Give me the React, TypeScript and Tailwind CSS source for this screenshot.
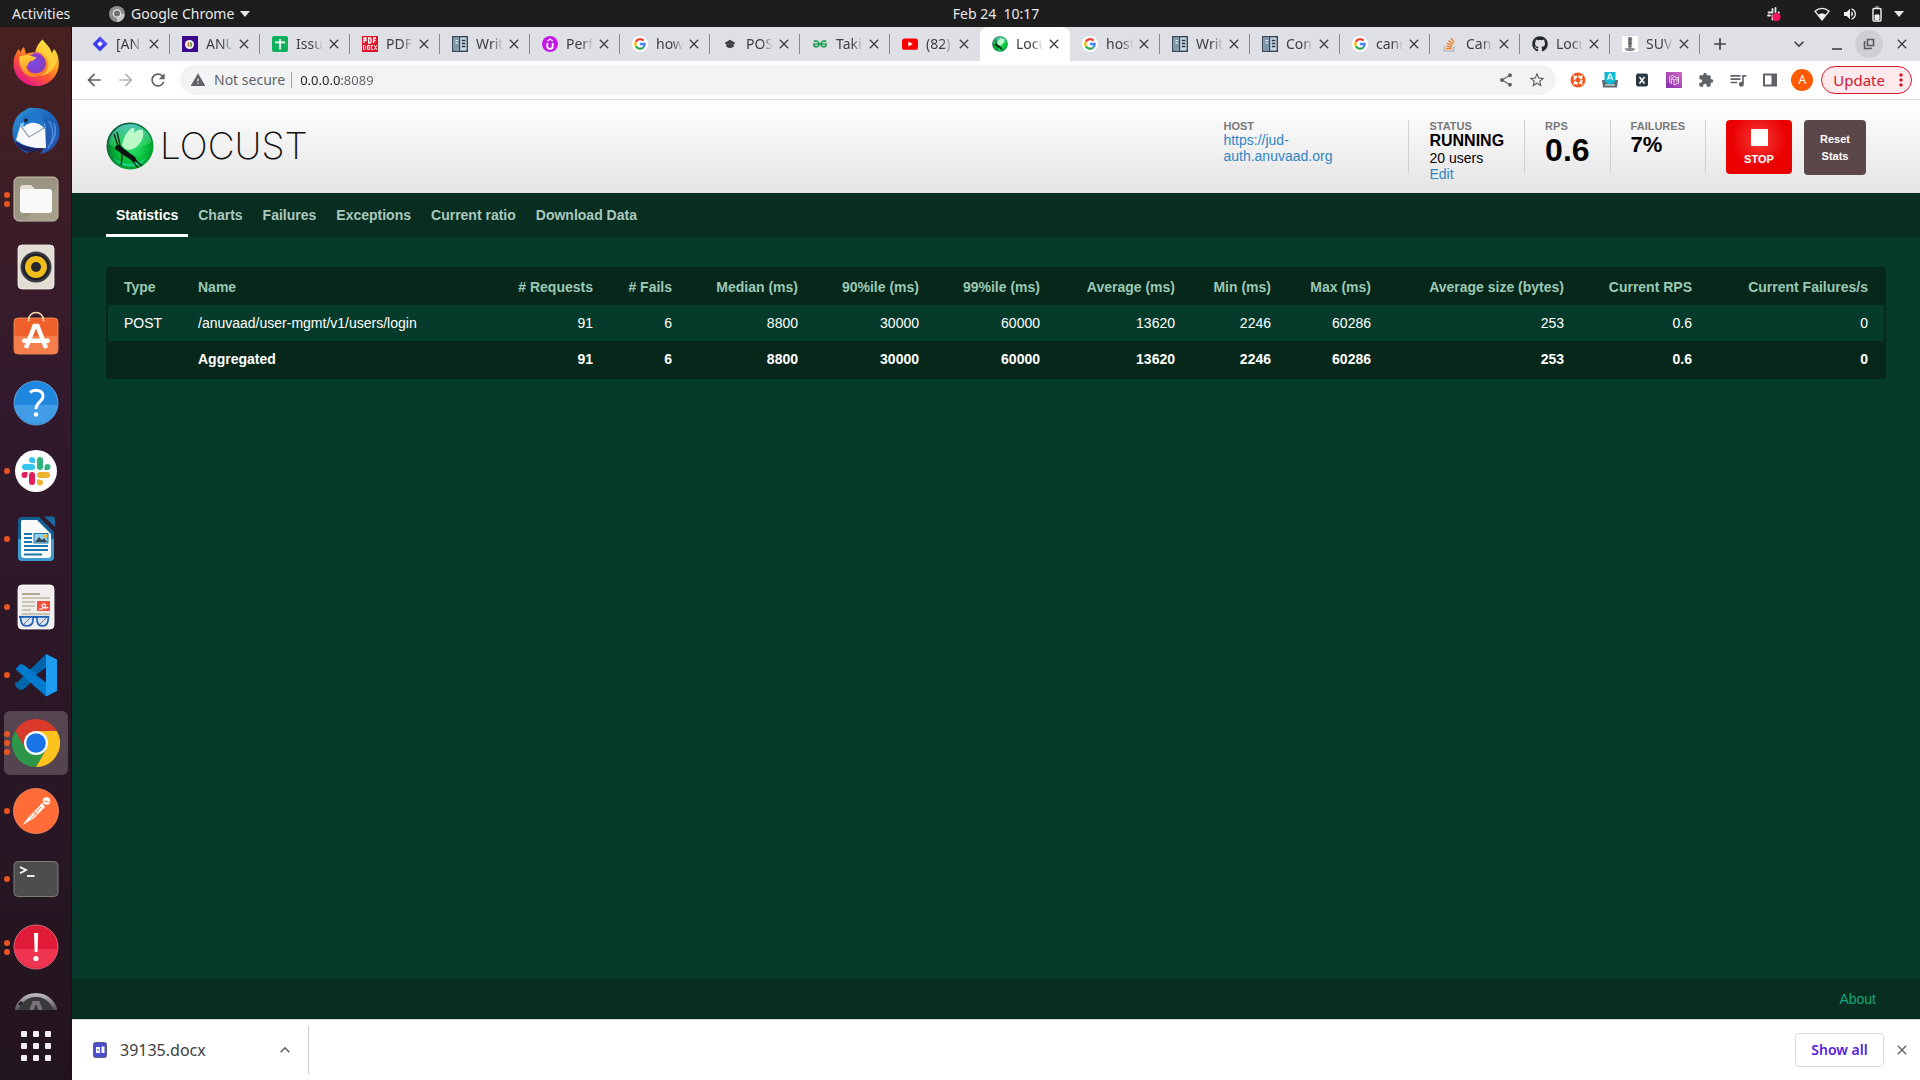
import React, { ReactNode } from "react";
import { FaGithub } from "react-icons/fa";
import {
  MdArrowBack,
  MdArrowForward,
  MdRefresh,
  MdWarning,
  MdShare,
  MdStarBorder,
  MdExtension,
  MdQueueMusic,
  MdMoreVert,
  MdAdd,
  MdExpandMore,
  MdExpandLess,
  MdClose,
  MdVolumeUp,
} from "react-icons/md";

/* ---------- Favicons (16 x 16) ---------- */

function Fav({ children }: { children: ReactNode }) {
  return (
    <svg viewBox="0 0 16 16" className="size-4 shrink-0" aria-hidden="true">
      {children}
    </svg>
  );
}

const GoogleFav = () => (
  <Fav>
    <circle cx="8" cy="8" r="8" fill="#fff" />
    <g fill="none" strokeWidth="2.3">
      <path d="M11.6 4.6A4.8 4.8 0 0 0 3.8 5.7" stroke="#ea4335" />
      <path d="M3.8 5.7a4.8 4.8 0 0 0 0 4.6" stroke="#fbbc05" />
      <path d="M3.8 10.3a4.8 4.8 0 0 0 7.4 1.2" stroke="#34a853" />
      <path d="M11.2 11.5A4.7 4.7 0 0 0 12.7 8H8" stroke="#4285f4" />
    </g>
  </Fav>
);

const DocFav = () => (
  <Fav>
    <rect x="0.7" y="0.7" width="14.6" height="14.6" fill="#c9dae7" stroke="#37474f" strokeWidth="1.4" />
    <rect x="1.4" y="1.4" width="6" height="13.2" fill="#7f97aa" />
    <path d="M7.6 1v14" stroke="#37474f" strokeWidth="1.2" />
    <path d="M3.5 4.5h2.500M3.500 7h2.500" stroke="#eef4f8" strokeWidth="1.200" />
    <path d="M9.800 4.500h3.500M9.800 7.500h3.500M9.800 10.500h3.500" stroke="#263238" strokeWidth="1.500" />
  </Fav>
);

const JiraFav = () => (
  <Fav>
    <path d="M8 0.5 15.5 8 8 15.5 0.5 8Z" fill="#3d3df5" />
    <path d="M8 0.5 15.5 8H8Z" fill="#5b4bff" />
    <path d="M8 5.2 10.8 8 8 10.8 5.2 8Z" fill="#fff" />
  </Fav>
);

const AnuvaadFav = () => (
  <Fav>
    <rect width="16" height="16" fill="#3b0a8c" />
    <circle cx="7.500" cy="8.500" r="4.500" fill="#f4f1e6" />
    <path d="M5.500 6.500h2v4h-2z" fill="#e0553d" />
    <path d="M8 6.500h2v4H8z" fill="#3aa657" />
    <circle cx="7.600" cy="8.500" r="1.100" fill="#efc94c" />
  </Fav>
);

const SheetsFav = () => (
  <Fav>
    <rect width="16" height="16" rx="2" fill="#0fb15d" />
    <path d="M8 3v10.500M3 6.400h10" stroke="#fff" strokeWidth="1.800" />
  </Fav>
);

const PdfFav = () => (
  <Fav>
    <rect width="16" height="16" fill="#e2122b" />
    <g fill="none" stroke="#fff" strokeWidth="1.300">
      <path d="M2 7V2h2v2.500H2M6.700 2h1.400l1 1v3l-1 1H6.700zM14 2h-2.400v5M11.600 4.500h2" />
      <path d="M1.500 9.500h1.200l.8.8v2.400l-.8.8H1.500zM5.500 9.500h1.800v4H5.500zM11 9.500H9.400v4H11M12.300 9.300l2.400 4.400M14.700 9.300l-2.400 4.400" strokeWidth="1" />
    </g>
  </Fav>
);

const PerfFav = () => (
  <Fav>
    <circle cx="8" cy="8" r="8" fill="#c517e8" />
    <path d="M5.300 7v3.200a2.700 2.700 0 0 0 5.400 0V7" fill="none" stroke="#fff" strokeWidth="1.800" />
    <path d="M5.300 5.200 8 3l2.700 2.200" fill="none" stroke="#fff" strokeWidth="1.300" />
  </Fav>
);

const PostFav = () => (
  <Fav>
    <path d="M2.500 7 8 3.800 13.500 7l-1.800 1.200v2.600L8 12.300l-3.700-1.500V8.200Z" fill="#3a3a3a" />
    <path d="M4 8h8" stroke="#6a6a6a" strokeWidth="0.800" />
  </Fav>
);

const GeeksFav = () => (
  <Fav>
    <g fill="none" stroke="#1f9d55" strokeWidth="1.600">
      <path d="M1.800 5.600C4 4 7 5.200 7 8a2.800 2.800 0 0 1-5.500.8M1.200 8h13.600" />
      <path d="M14.200 5.600C12 4 9 5.200 9 8a2.800 2.800 0 0 0 5.500.8" />
    </g>
  </Fav>
);

const YoutubeFav = () => (
  <Fav>
    <rect y="2.400" width="16" height="11.400" rx="2.600" fill="#f00" />
    <path d="M6.400 5.600 10.800 8.100 6.400 10.600Z" fill="#fff" />
  </Fav>
);

const StackFav = () => (
  <Fav>
    <path d="M2.300 10.300v4.700h9.400v-4.700" fill="none" stroke="#bcbbbb" strokeWidth="1.400" />
    <path d="M4 12.600h6M4.200 10.200l5.800.9M4.900 7.400l5.300 2.200M6.400 4.500l4.500 3.600M9 1.900l3.300 4.700" stroke="#f48024" strokeWidth="1.400" />
  </Fav>
);

const SuvFav = () => (
  <Fav>
    <rect width="16" height="16" fill="#fff" />
    <circle cx="8" cy="3" r="2.300" fill="#808080" />
    <circle cx="8" cy="7.600" r="2.300" fill="#8c8c8c" />
    <path d="M8 3v11" stroke="#5c5c5c" strokeWidth="1.800" />
    <path d="M6 5.300h4M6 10.300h4" stroke="#777" strokeWidth="1.200" />
    <path d="M3 12.500c2 2.600 8 2.600 10 0M5 12.500h6" fill="none" stroke="#8a8a8a" strokeWidth="1.600" />
  </Fav>
);

function LocustBall({ className }: { className: string }) {
  return (
    <svg viewBox="0 0 48 48" className={className} aria-hidden="true">
      <defs>
        <radialGradient id="ball" cx="0.55" cy="0.55" r="0.55">
          <stop offset="0" stopColor="#2fe36b" />
          <stop offset="0.55" stopColor="#06bf3c" />
          <stop offset="0.85" stopColor="#04962f" />
          <stop offset="1" stopColor="#0a5a3c" />
        </radialGradient>
        <linearGradient id="gloss" x1="0" y1="0" x2="0" y2="1">
          <stop offset="0" stopColor="#52c9c4" stopOpacity="0.95" />
          <stop offset="1" stopColor="#5df08e" stopOpacity="0.2" />
        </linearGradient>
      </defs>
      <circle cx="24" cy="24" r="23.500" fill="url(#ball)" />
      <path d="M24 2A22 22 0 0 0 2.500 22C14 30 34 28 45.500 20A22 22 0 0 0 24 2Z" fill="url(#gloss)" />
      <path d="M7 35a20 20 0 0 0 34 0c-9 9-25 9-34 0Z" fill="#1fe0a0" opacity="0.75" />
      <path d="M16 23C18 13 24 5 28 6c2 3-3 14-10 20ZM18 26C23 14 31 6 36.500 8c3 7-3 19-14.500 20Z" fill="#d2ffd6" opacity="0.85" />
      <path d="M9 27c0-3 2-5 5-4l4 4 11 8 2 4-3 1-12-8-4-3Z" fill="#0b1410" />
      <path d="M12 24 8 12M14 23l-3-13M16 31v6l-1 6M27 36l9 8M25 37l7 9" stroke="#0b1410" strokeWidth="1.200" fill="none" />
    </svg>
  );
}

/* ---------- Dock icons (48 x 48) ---------- */

function Dock({ children }: { children: ReactNode }) {
  return (
    <svg viewBox="0 0 48 48" className="size-12" aria-hidden="true">
      {children}
    </svg>
  );
}

const Firefox = () => (
  <Dock>
    <defs>
      <linearGradient id="ff1" x1="0.85" y1="0.05" x2="0.25" y2="0.95">
        <stop offset="0" stopColor="#fff44f" />
        <stop offset="0.35" stopColor="#ffa520" />
        <stop offset="0.65" stopColor="#ff5a30" />
        <stop offset="1" stopColor="#e31587" />
      </linearGradient>
      <linearGradient id="ff2" x1="0.2" y1="0" x2="0.5" y2="1">
        <stop offset="0" stopColor="#ffd43a" />
        <stop offset="1" stopColor="#ff7c2a" />
      </linearGradient>
      <radialGradient id="ff3" cx="0.4" cy="0.5" r="0.6">
        <stop offset="0" stopColor="#7a4be8" />
        <stop offset="1" stopColor="#8a3bb8" />
      </radialGradient>
    </defs>
    <path d="M30.500 0.500c2 3.500 5 5 7.500 9 1 2 1.500 3.500 2 4.500l2-4C45 13 47 18 46.800 25 46.500 37 37 47 24.500 47S1.500 37.500 1.500 25c0-7 2.500-11.500 5.500-15l1.500 3.500C9 11 10.500 9 12 8l2 7c3-1 6-2 9-1.500C24 8 27 4 30.500 0.500Z" fill="url(#ff1)" />
    <path d="M30.500 0.500C27 4 24.500 8 25 12.500c6 1 11 5 11.500 11.500.3 6-4 11-9 13 9-1 16-7 17-15-1-4-3-5.500-5.500-8-1-6-6-8-8.500-13.500Z" fill="#ffd83d" opacity="0.75" />
    <circle cx="24" cy="24.500" r="10" fill="url(#ff3)" />
    <path d="M7 18c4-1.500 7-2.500 11-1.500 2 .5 3 1.500 6 1.500-.5 3-4 4-6 4.500-2 1-1 3-3.500 5C15 33 20 35 24 34.500c4-.5 6-2 8-3.500 1 3-5 7-10.500 7C13 38 7 30 7 18Z" fill="url(#ff2)" />
    <path d="M21 14c3-1 7 0 9.500 2-2-.3-3 0-4 .2Z" fill="#b833e1" />
  </Dock>
);

const Thunderbird = () => (
  <Dock>
    <defs>
      <linearGradient id="tb" x1="0" y1="0" x2="1" y2="1">
        <stop offset="0" stopColor="#2f9ae0" />
        <stop offset="0.5" stopColor="#1b63b8" />
        <stop offset="1" stopColor="#2a4fa5" />
      </linearGradient>
    </defs>
    <path d="M12 4C15 1 18 0 21 1c14-1 26 8 26.500 23C48 36 40 45 28 47l4-6-18 5C5 41 0 34 .5 24 1 15 5 7 12 4Z" fill="url(#tb)" />
    <path d="M4 33 9 16c8-2 17-3 24 1l1 24c-11 1-23-2-30-8Z" fill="#f7f8fa" />
    <path d="m8 18 9 12 17-10" fill="none" stroke="#9aa3b5" strokeWidth="1.300" />
    <path d="M9 17C9 10 13 6 18 6c10 0 15 6 15 16-4-5-9-7-14-6-4 1-6 2-7 4Z" fill="#2277cc" />
    <path d="M3 34c8 6 19 8 30 7-7 4-16 5-22 2-4-2-7-5-8-9Z" fill="#20205a" />
    <path d="M37 14c5 8 5 18-1 27M42 16c3 8 1 15-3 21" fill="none" stroke="#4a8fe0" strokeWidth="1.500" />
    <circle cx="14" cy="13.500" r="2" fill="#20242d" />
    <path d="m8 17 4-2-1 6Z" fill="#7cc8f2" />
  </Dock>
);

const Files = () => (
  <Dock>
    <rect x="2" y="2" width="44" height="44" rx="5" fill="#9c9482" stroke="#c9c3b2" strokeWidth="1" />
    <path d="M46 12v29a5 5 0 0 1-5 5H12Z" fill="#ada592" opacity="0.7" />
    <path d="M8 18v-5q0-3 3-3h8l4 4h14v6Z" fill="#e4dfd2" />
    <rect x="8" y="14" width="32" height="24" rx="3" fill="#faf9f7" />
  </Dock>
);

const Music = () => (
  <Dock>
    <rect x="6" y="2" width="36" height="44" rx="4" fill="#e3ded4" stroke="#f5f3ee" strokeWidth="0.800" />
    <circle cx="24" cy="24" r="15.500" fill="#3b3d46" />
    <circle cx="24" cy="24" r="13.500" fill="#1f2129" />
    <circle cx="24" cy="24" r="11" fill="#f0bd1c" />
    <circle cx="24" cy="24" r="5" fill="#25262b" />
  </Dock>
);

const Software = () => (
  <Dock>
    <rect x="2" y="7" width="44" height="36" rx="4" fill="#f0602a" stroke="#f7965f" strokeWidth="0.800" />
    <path d="M2.500 25h43v14a4 4 0 0 1-4 4h-35a4 4 0 0 1-4-4Z" fill="#f47f4c" />
    <path d="M16.500 10.500V9a7.500 7.500 0 0 1 15 0v1.500" fill="none" stroke="#f6dcae" strokeWidth="1.600" />
    <path d="M14 37 22.500 15h3L34 37" fill="none" stroke="#fff" strokeWidth="4.500" />
    <rect x="10" y="27.500" width="28" height="4.500" rx="2.200" fill="#fff" />
  </Dock>
);

const Help = () => (
  <Dock>
    <circle cx="24" cy="24" r="22" fill="#1f87dd" stroke="#6bb6ef" strokeWidth="0.800" />
    <path d="M2.200 26h43.600a22 22 0 0 1-43.600 0Z" fill="#429de6" />
    <path d="M18 13.500c3-3 13-3.500 13 3.500 0 6-7 6-7 13" fill="none" stroke="#fff" strokeWidth="3" />
    <circle cx="24" cy="35.500" r="2.300" fill="#fff" />
  </Dock>
);

const Slack = () => (
  <Dock>
    <circle cx="24" cy="24" r="21" fill="#fff" />
    <g fill="#36c5f0">
      <path d="M23 13a3 3 0 1 0-3 3h3Z" />
      <rect x="10" y="17" width="13" height="6" rx="3" />
    </g>
    <g fill="#2eb67d">
      <rect x="25" y="10" width="6" height="13" rx="3" />
      <path d="M32.500 20a3 3 0 1 1 3 3h-3Z" />
    </g>
    <g fill="#ecb22e">
      <rect x="25" y="25" width="13" height="6" rx="3" />
      <path d="M25 32.500h3a3 3 0 1 1-3 3Z" />
    </g>
    <g fill="#e01e5a">
      <path d="M15.500 25h-3a3 3 0 1 0 3 3Z" />
      <rect x="17" y="25" width="6" height="13" rx="3" />
    </g>
  </Dock>
);

const Writer = () => (
  <Dock>
    <path d="M10 2h17l15 15v25a4 4 0 0 1-4 4H10a4 4 0 0 1-4-4V6a4 4 0 0 1 4-4Z" fill="#11608f" />
    <path d="M6 24h36v18a4 4 0 0 1-4 4H10a4 4 0 0 1-4-4Z" fill="#3b9bce" />
    <path d="M10 5h15l14 14v21q0 3-3 3H12q-3 0-3-3V6Z" fill="#fafafa" />
    <path d="M32 1.500h8q3 0 3 3V12Z" fill="#186a9c" />
    <path d="M12 19h8M12 23h8M12 27h8M12 31h24M12 35h24M12 39.500h18" stroke="#1876aa" strokeWidth="1.800" />
    <rect x="22" y="18.500" width="14" height="9.500" fill="#8fd0f0" stroke="#1876aa" strokeWidth="1" />
    <path d="m23 27 4-5 3 3 2-2 3 4Z" fill="#3a4550" />
    <circle cx="33.500" cy="21" r="1.800" fill="#f3b51d" />
  </Dock>
);

const Evince = () => (
  <Dock>
    <rect x="6" y="2" width="36" height="44" rx="4" fill="#f1efed" stroke="#fff" strokeWidth="0.800" />
    <path d="M10 11h18" stroke="#b0a68e" strokeWidth="2" />
    <path d="M10 15h28M10 19h13M10 23h13M10 27h9M10 31h28" stroke="#c9c3b4" strokeWidth="1.800" />
    <rect x="25" y="18" width="13" height="10" fill="#f0503c" />
    <path d="M27 26c4 1 7-2 6.500-4s-4-1-3.500 1 4 3 6 1" fill="none" stroke="#fff" strokeWidth="1.200" />
    <path d="M7 34h30" fill="none" stroke="#1a5fb4" strokeWidth="2.200" />
    <path d="M8.500 34H21v4q-1 5-6 5t-6-5ZM25 34h11.500l-.5 4q-1 5-5.500 5T25 38Z" fill="#d5e1ee" stroke="#1a5fb4" strokeWidth="1.600" />
    <path d="m12 41 6-6M28 41l6-6" stroke="#777" strokeWidth="1" />
  </Dock>
);

const Code = () => (
  <Dock>
    <path d="M34 3 5 31.500 3.200 31v4l4.500 4 4-.8L34 17Z" fill="#0065a9" />
    <path d="M4 17.500 8 13l3.500.8L34 30v15.500L3.800 18.500Z" fill="#007acc" />
    <path d="M34 3v42.500L45 40V8.500Z" fill="#1f9cf0" />
    <path d="M34 16.500v15L24 24Z" fill="#2c172c" />
  </Dock>
);

const Chrome = () => (
  <Dock>
    <path d="M24 12h20.800A24 24 0 0 0 3.200 12L13.600 30Z" fill="#d93a2b" />
    <path d="M13.600 30 3.200 12A24 24 0 0 0 24 48L34.400 30Z" fill="#2d9648" />
    <path d="M34.400 18 34.400 30 24 48A24 24 0 0 0 44.800 12H24Z" fill="#fcc31e" />
    <circle cx="24" cy="24" r="12" fill="#fff" />
    <circle cx="24" cy="24" r="9.800" fill="#1a73e8" />
  </Dock>
);

const Postman = () => (
  <Dock>
    <circle cx="24" cy="24" r="22.500" fill="#ff6c37" stroke="#ff8e63" strokeWidth="0.800" />
    <circle cx="34.500" cy="14" r="3.800" fill="#fff" />
    <path d="M30 16 33 20 21 32l-4 2-6.500 4.500L15 32l3-4Z" fill="#fff" />
    <path d="m19 32 10-12M17 30l11-12M32 14l5 1M22 25l3 3" stroke="#ff6c37" strokeWidth="0.900" />
  </Dock>
);

const Terminal = () => (
  <Dock>
    <rect x="2" y="6.500" width="44" height="35" rx="4" fill="#4d4d4d" stroke="#7c7c78" strokeWidth="1" />
    <path d="m8 12 6 3-6 3.200" fill="none" stroke="#fff" strokeWidth="1.800" />
    <path d="M15 21h7.500" stroke="#fff" strokeWidth="1.800" />
  </Dock>
);

const Alert = () => (
  <Dock>
    <circle cx="24" cy="24" r="22" fill="#df1b38" stroke="#f47c8c" strokeWidth="0.800" />
    <path d="M2.200 26h43.600a22 22 0 0 1-43.600 0Z" fill="#ee3450" />
    <path d="M22 10h4.200l-.7 19h-2.800Z" fill="#fff" />
    <circle cx="24" cy="35.500" r="2.600" fill="#fff" />
  </Dock>
);

const Updater = () => (
  <Dock>
    <defs>
      <linearGradient id="upd" x1="0" y1="0" x2="0" y2="1">
        <stop offset="0" stopColor="#b9b7b9" />
        <stop offset="0.400" stopColor="#4a444a" />
      </linearGradient>
    </defs>
    <circle cx="24" cy="24" r="20" fill="#3b383b" stroke="url(#upd)" strokeWidth="4" />
    <path d="m17 26 5-14h4l5 14" fill="none" stroke="#77727a" strokeWidth="4" />
    <path d="m7 14 3-3" stroke="#2a222a" strokeWidth="3" />
  </Dock>
);

const dockItems: { name: string; icon: ReactNode; dots: number; active?: boolean }[] = [
  { name: "Firefox", icon: <Firefox />, dots: 0 },
  { name: "Thunderbird", icon: <Thunderbird />, dots: 0 },
  { name: "Files", icon: <Files />, dots: 2 },
  { name: "Rhythmbox", icon: <Music />, dots: 0 },
  { name: "Ubuntu Software", icon: <Software />, dots: 0 },
  { name: "Help", icon: <Help />, dots: 0 },
  { name: "Slack", icon: <Slack />, dots: 1 },
  { name: "LibreOffice Writer", icon: <Writer />, dots: 1 },
  { name: "Document Viewer", icon: <Evince />, dots: 1 },
  { name: "Visual Studio Code", icon: <Code />, dots: 1 },
  { name: "Google Chrome", icon: <Chrome />, dots: 3, active: true },
  { name: "Postman", icon: <Postman />, dots: 1 },
  { name: "Terminal", icon: <Terminal />, dots: 1 },
  { name: "Problem Report", icon: <Alert />, dots: 2 },
  { name: "Software Updater", icon: <Updater />, dots: 0 },
];

/* ---------- Desktop shell ---------- */

function TopBar() {
  return (
    <header className="grid h-[27px] shrink-0 grid-cols-[1fr_auto_1fr] items-center bg-[#1d1d1d] pl-18 text-sm text-[#e8e8e8]">
      <div className="-ml-18 flex items-center">
        <button className="ml-3 w-[97px] text-left">Activities</button>
        <button className="flex items-center gap-1.5">
          <svg viewBox="0 0 16 16" className="size-4" aria-hidden="true">
            <circle cx="8" cy="8" r="8" fill="#8d8d8d" />
            <path d="M8 8h7.500A8 8 0 0 1 8 16Z" fill="#c9c9c9" />
            <circle cx="8" cy="7.500" r="4.200" fill="#e5e5e5" />
            <circle cx="8" cy="7.500" r="3" fill="#707070" />
          </svg>
          <span>Google Chrome</span>
          <svg viewBox="0 0 10 6" className="h-1.5 w-2.5" aria-hidden="true">
            <path d="M0 0h10L5 6Z" fill="#e8e8e8" />
          </svg>
        </button>
      </div>
      <button className="whitespace-pre">Feb 24  10:17</button>
      <div className="flex items-center justify-end pr-4">
        <svg viewBox="0 0 16 16" className="mr-8 size-4" aria-hidden="true">
          <g stroke="#e8e8e8" strokeWidth="1.800" strokeLinecap="round">
            <path d="M6.500 3v3M9.500 2v4M2.500 6.500h4M12.500 6.500h.5M2 9.500h2M6.500 9.500v4" />
          </g>
          <circle cx="10.500" cy="11" r="4.200" fill="#f4145f" />
        </svg>
        <svg viewBox="0 0 16 16" className="mr-3 size-4" aria-hidden="true">
          <path d="M1 5.200C5 1.500 11 1.500 15 5.200L8 14Z" fill="none" stroke="#f2f2f2" strokeWidth="1.200" />
          <path d="M4.300 8.800c2-1.700 5.400-1.700 7.400 0L8 14Z" fill="#f2f2f2" />
        </svg>
        <MdVolumeUp className="mr-3.5 size-4 text-[#f2f2f2]" />
        <svg viewBox="0 0 10 16" className="mr-3 h-4 w-2.5" aria-hidden="true">
          <rect x="1" y="2.500" width="8" height="12.500" rx="1" fill="none" stroke="#f2f2f2" strokeWidth="1.400" />
          <path d="M3.500 1h3M3 9h4v4.500H3Z" stroke="#f2f2f2" fill="#f2f2f2" strokeWidth="1" />
        </svg>
        <svg viewBox="0 0 10 6" className="h-1.5 w-2.5" aria-hidden="true">
          <path d="M0 0h10L5 6Z" fill="#e8e8e8" />
        </svg>
      </div>
    </header>
  );
}

function Sidebar() {
  return (
    <nav
      aria-label="Dock"
      className="flex w-18 shrink-0 flex-col border-r border-[#1b1018] bg-linear-to-b from-[#47211f] via-[#32192d] via-35% to-[#22141e] pt-0.5"
    >
      <div className="flex min-h-0 flex-1 flex-col overflow-hidden">
        {dockItems.map((d) => (
          <button
            key={d.name}
            aria-label={d.name}
            className="relative flex h-17 shrink-0 items-center justify-center"
          >
            <span
              className={
                d.active
                  ? "flex size-16 items-center justify-center rounded-md bg-white/20"
                  : "flex size-16 items-center justify-center"
              }
            >
              {d.icon}
            </span>
            <span className="absolute inset-y-0 left-1 flex flex-col items-center justify-center gap-[3px]">
              {Array.from({ length: d.dots }, (_, i) => (
                <span key={i} className="size-1.5 rounded-full bg-[#e95420]" />
              ))}
            </span>
          </button>
        ))}
      </div>
      <button aria-label="Show applications" className="flex h-[70px] shrink-0 items-center justify-center pt-0.5">
        <span className="grid grid-cols-3 gap-1.5">
          {Array.from({ length: 9 }, (_, i) => (
            <span key={i} className="size-1.5 rounded-[1px] bg-[#f2f0ef]" />
          ))}
        </span>
      </button>
    </nav>
  );
}

/* ---------- Browser chrome ---------- */

const tabs: { title: string; icon: ReactNode; active?: boolean }[] = [
  { title: "[AN", icon: <JiraFav /> },
  { title: "ANU", icon: <AnuvaadFav /> },
  { title: "Issu", icon: <SheetsFav /> },
  { title: "PDF", icon: <PdfFav /> },
  { title: "Writ", icon: <DocFav /> },
  { title: "Perf", icon: <PerfFav /> },
  { title: "how", icon: <GoogleFav /> },
  { title: "POS", icon: <PostFav /> },
  { title: "Taki", icon: <GeeksFav /> },
  { title: "(82)", icon: <YoutubeFav /> },
  { title: "Locu", icon: <LocustBall className="size-4 shrink-0" />, active: true },
  { title: "host", icon: <GoogleFav /> },
  { title: "Writ", icon: <DocFav /> },
  { title: "Con", icon: <DocFav /> },
  { title: "cann", icon: <GoogleFav /> },
  { title: "Can", icon: <StackFav /> },
  { title: "Locu", icon: <FaGithub className="size-4 shrink-0 text-[#24292f]" /> },
  { title: "SUV", icon: <SuvFav /> },
];

function TabStrip() {
  return (
    <div className="flex h-[34px] shrink-0 items-stretch bg-[#dee0e6] pl-2">
      {tabs.map((t, i) => {
        const divided = !t.active && !tabs[i + 1]?.active;
        return (
          <div
            key={i}
            className={
              t.active
                ? "flex w-[90px] items-center rounded-t-lg bg-white pl-3"
                : "flex w-[90px] items-center pl-3"
            }
          >
            {t.icon}
            <button className="ml-2 w-[27px] overflow-hidden text-left text-sm whitespace-nowrap text-[#3c4043] [mask-image:linear-gradient(to_right,black_60%,transparent)]">
              {t.title}
            </button>
            <button aria-label="Close tab" className="ml-[3px] flex size-4 items-center justify-center">
              <MdClose className="size-4 text-[#3c4043]" />
            </button>
            {divided && <span className="ml-auto h-5 w-px bg-[#85888e]" />}
          </div>
        );
      })}
      <button aria-label="New tab" className="ml-2.5 flex items-center">
        <MdAdd className="size-5 text-[#3c4043]" />
      </button>
      <div className="ml-auto flex items-center pr-2.5 text-[#3c4043]">
        <button aria-label="Search tabs" className="mr-5">
          <MdExpandMore className="size-5" />
        </button>
        <button aria-label="Minimize" className="mr-2.5 flex size-4 items-end justify-center pb-0.5">
          <span className="h-0.5 w-2.5 bg-[#5f6368]" />
        </button>
        <button aria-label="Restore" className="mr-[11px] flex size-7 items-center justify-center rounded-full bg-[#cdcfd4]">
          <svg viewBox="0 0 12 12" className="size-3" aria-hidden="true">
            <path d="M4.500 1.500h6v6h-6ZM2.500 4H1.500v6.500H8V9.500" fill="none" stroke="#55585d" strokeWidth="1.600" />
          </svg>
        </button>
        <button aria-label="Close window">
          <MdClose className="size-4" />
        </button>
      </div>
    </div>
  );
}

function Toolbar() {
  return (
    <div className="flex h-[39px] shrink-0 items-center border-b border-[#d8dadd] bg-white text-[#5f6368]">
      <div className="flex items-center gap-3 px-3">
        <button aria-label="Back">
          <MdArrowBack className="size-5" />
        </button>
        <button aria-label="Forward">
          <MdArrowForward className="size-5 text-[#b4b6b9]" />
        </button>
        <button aria-label="Reload">
          <MdRefresh className="size-5" />
        </button>
      </div>
      <div className="flex h-[30px] flex-1 items-center rounded-full bg-[#f1f3f4] pr-2.5 pl-2.5 text-sm">
        <MdWarning className="size-4" />
        <label htmlFor="address" className="ml-2">
          Not secure
        </label>
        <span className="mx-1.5 h-4 w-px bg-[#9b9ea2]" />
        <input
          id="address"
          defaultValue="0.0.0.0:8089"
          className="ml-0.5 min-w-0 flex-1 bg-linear-to-r from-[#202124] from-[42px] to-[#5f6368] to-[42px] bg-clip-text text-[13px] text-transparent outline-none"
        />
        <button aria-label="Share" className="mr-3.5">
          <MdShare className="size-4" />
        </button>
        <button aria-label="Bookmark">
          <MdStarBorder className="size-[18px]" />
        </button>
      </div>
      <div className="ml-3.5 flex items-center gap-4">
        <button aria-label="Extension">
          <svg viewBox="0 0 16 16" className="size-4" aria-hidden="true">
            <circle cx="8" cy="8" r="7.500" fill="#f25a22" />
            <circle cx="8" cy="8" r="3.600" fill="none" stroke="#fff" strokeWidth="2" strokeDasharray="4.200 1.450" />
            <path d="m3.500 3.500 2 2M12.500 3.500l-2 2M3.500 12.500l2-2M12.500 12.500l-2-2" stroke="#fff" strokeWidth="1.200" />
          </svg>
        </button>
        <button aria-label="Translate extension">
          <svg viewBox="0 0 16 16" className="size-4" aria-hidden="true">
            <path d="M0 8h16l-1 7.500H1Z" fill="#5e6b70" />
            <path d="M2.500 0h11v9l-3 3h-5l-3-3Z" fill="#0fbcd4" />
            <path d="m5.500 8 2-6h1l2 6M6.500 6h3" fill="none" stroke="#fff" strokeWidth="1.200" />
            <path d="M3 13h10" stroke="#c3cacc" strokeWidth="1.500" />
          </svg>
        </button>
        <button aria-label="XPath extension">
          <svg viewBox="0 0 16 16" className="size-4" aria-hidden="true">
            <rect x="2" y="1.500" width="12" height="13" rx="2" fill="#2b3a42" />
            <path d="m5.500 5 5 6.500M10.500 5l-5 6.500" stroke="#fff" strokeWidth="1.500" />
          </svg>
        </button>
        <button aria-label="Recorder extension">
          <svg viewBox="0 0 16 16" className="size-4" aria-hidden="true">
            <defs>
              <linearGradient id="rec" x1="0" y1="1" x2="1" y2="0">
                <stop offset="0" stopColor="#8a2fb0" />
                <stop offset="1" stopColor="#cf6ac0" />
              </linearGradient>
            </defs>
            <rect width="16" height="16" fill="url(#rec)" />
            <path d="M3.500 5v5l2 1.500V6.500L8 8v5M3.500 5l3-1.500L11 6v4M5.500 6.500l2-1M8 8l2-1M11 6l1.500-1v6L8 13" fill="none" stroke="#f3dcf7" strokeWidth="0.900" />
          </svg>
        </button>
        <button aria-label="Extensions">
          <MdExtension className="size-4" />
        </button>
        <button aria-label="Media controls">
          <MdQueueMusic className="size-4 scale-125" />
        </button>
        <button aria-label="Side panel">
          <svg viewBox="0 0 16 16" className="size-4" aria-hidden="true">
            <path d="M1 1.500h14v13H1Z" fill="#5f6368" />
            <path d="M3 3.500h6.500v9H3Z" fill="#fff" />
          </svg>
        </button>
      </div>
      <button className="ml-[13px] flex size-[22px] items-center justify-center rounded-full bg-[#ff5a00] text-xs text-white">
        A
      </button>
      <button className="mr-2 ml-2 flex h-7 items-center rounded-full border border-[#d5162e] bg-[#fbe9eb] pl-[11px] text-[15px] text-[#d5162e]">
        Update
        <MdMoreVert className="ml-1.5 size-5" />
      </button>
    </div>
  );
}

/* ---------- Locust page ---------- */

function PageHeader() {
  return (
    <div className="flex h-[93px] shrink-0 items-start justify-between bg-linear-to-b from-white to-[#e4e4e4] pr-[54px] pl-[34px]">
      <a href="#top" className="flex items-center gap-1.5 pt-[22px] text-[#111]">
        <LocustBall className="size-12" />
        <span className="font-['Inter',sans-serif] text-[37px] leading-12 font-extralight">LOCUST</span>
      </a>
      <div className="flex items-start pt-5 text-sm leading-4 text-black">
        <dl className="flex">
          <div className="h-[53px] w-[186px] border-r border-[#d0d0d0] pr-5">
            <dt className="text-[11px] leading-3 font-bold text-[#7a7a7a]">HOST</dt>
            <dd className="w-[120px]">
              <a href="#host" className="text-[#3086c4]">
                https://jud-auth.anuvaad.org
              </a>
            </dd>
          </div>
          <div className="h-[53px] border-r border-[#d0d0d0] px-5">
            <dt className="text-[11px] leading-3 font-bold text-[#7a7a7a]">STATUS</dt>
            <dd>
              <div className="text-base leading-[18px] font-bold">RUNNING</div>
              <div>20 users</div>
              <a href="#edit" className="text-[#3086c4]">
                Edit
              </a>
            </dd>
          </div>
          <div className="h-[53px] border-r border-[#d0d0d0] px-5">
            <dt className="text-[11px] leading-3 font-bold text-[#7a7a7a]">RPS</dt>
            <dd className="text-[32px] leading-9 font-bold">0.6</dd>
          </div>
          <div className="h-[53px] border-r border-[#d0d0d0] px-5">
            <dt className="text-[11px] leading-3 font-bold text-[#7a7a7a]">FAILURES</dt>
            <dd className="text-[22px] leading-[26px] font-bold">7%</dd>
          </div>
        </dl>
        <button className="ml-5 flex h-[54px] w-[66px] flex-col items-center justify-between rounded bg-radial-[at_50%_35%] from-[#f53a3a] to-[#ea0000] to-60% py-[9px] text-[11px] leading-3 font-bold text-white">
          <span className="size-[17px] bg-white" />
          STOP
        </button>
        <button className="ml-3 h-[55px] w-[62px] rounded bg-[#5b474a] px-2 text-[11px] leading-[17px] font-bold text-white">
          Reset Stats
        </button>
      </div>
    </div>
  );
}

const sections = ["Statistics", "Charts", "Failures", "Exceptions", "Current ratio", "Download Data"];

const columns = [
  { label: "Type", width: "w-[74px]" },
  { label: "Name", width: "w-[307px]" },
  { label: "# Requests", width: "w-[120px]" },
  { label: "# Fails", width: "w-[79px]" },
  { label: "Median (ms)", width: "w-[126px]" },
  { label: "90%ile (ms)", width: "w-[121px]" },
  { label: "99%ile (ms)", width: "w-[121px]" },
  { label: "Average (ms)", width: "w-[135px]" },
  { label: "Min (ms)", width: "w-[96px]" },
  { label: "Max (ms)", width: "w-[100px]" },
  { label: "Average size (bytes)", width: "w-[193px]" },
  { label: "Current RPS", width: "w-[128px]" },
  { label: "Current Failures/s", width: "w-[176px]" },
];

const values = ["91", "6", "8800", "30000", "60000", "13620", "2246", "60286", "253", "0.6", "0"];
const loginRow = ["POST", "/anuvaad/user-mgmt/v1/users/login", ...values];
const totalRow = ["", "Aggregated", ...values];

function Row({ cells, total }: { cells: string[]; total?: boolean }) {
  return (
    <tr className={total ? "h-9 bg-[#07271b] font-bold" : "h-9 bg-[#063b2c]"}>
      {cells.map((c, i) => (
        <td key={i} className={i < 2 ? "px-4 text-left" : "px-4 text-right"}>
          {c}
        </td>
      ))}
    </tr>
  );
}

function LocustPage() {
  return (
    <main className="flex min-h-0 flex-1 flex-col bg-[#063b2c] font-['Liberation_Sans',Arial,sans-serif]">
      <PageHeader />
      <nav aria-label="Sections" className="flex h-11 shrink-0 bg-[#082d21] pl-[34px] text-sm font-bold">
        {sections.map((s, i) => (
          <a
            key={s}
            href={"#" + s}
            className={
              i === 0
                ? "flex items-center border-b-3 border-white px-2.5 pt-[3px] text-white"
                : "flex items-center px-2.5 text-[#abc8bc]"
            }
          >
            {s}
          </a>
        ))}
      </nav>
      <div className="flex-1 px-[34px] pt-[30px]">
        <div className="overflow-hidden rounded border-2 border-[#07271b]">
          <table className="w-full table-fixed text-sm text-white">
            <colgroup>
              {columns.map((c) => (
                <col key={c.label} className={c.width} />
              ))}
            </colgroup>
            <thead>
              <tr className="h-9 bg-[#07271b] text-[#9cc9b4]">
                {columns.map((c, i) => (
                  <th
                    key={c.label}
                    scope="col"
                    className={
                      i < 2
                        ? "px-4 text-left font-bold whitespace-nowrap"
                        : "pr-4 text-right font-bold whitespace-nowrap"
                    }
                  >
                    {c.label}
                  </th>
                ))}
              </tr>
            </thead>
            <tbody>
              <Row cells={loginRow} />
              <Row cells={totalRow} total />
            </tbody>
          </table>
        </div>
      </div>
      <footer className="flex h-10 shrink-0 items-center justify-end bg-[#082d21] pr-11 text-sm">
        <a href="#about" className="text-[#0fa878]">
          About
        </a>
      </footer>
    </main>
  );
}

function DownloadShelf() {
  return (
    <div className="flex h-[61px] shrink-0 items-center border-t border-[#cfd8d4] bg-white pr-2.5 pl-5">
      <button className="flex items-center text-base text-[#3c4043]">
        <svg viewBox="0 0 16 16" className="size-4" aria-hidden="true">
          <rect x="1.500" y="0.500" width="13" height="15" rx="2" fill="#4a4fd0" stroke="#55607a" />
          <path d="M4 5h4v6H4ZM9.500 4.500h3v6.500h-3Z" fill="#fff" />
          <path d="M5 7h2v2H5Z" fill="#8f93ea" />
        </svg>
        <span className="ml-3">39135.docx</span>
      </button>
      <button aria-label="Download options" className="ml-[69px]">
        <MdExpandLess className="size-5 text-[#5f6368]" />
      </button>
      <span className="ml-[13px] h-12 w-px bg-[#c6c8cb]" />
      <button className="ml-auto h-[34px] w-[89px] rounded border border-[#d9dbdf] text-sm font-semibold text-[#5620e0]">
        Show all
      </button>
      <button aria-label="Close downloads bar" className="ml-2.5">
        <MdClose className="size-4 text-[#5f6368]" />
      </button>
    </div>
  );
}

export default function App() {
  return (
    <div id="top" className="flex h-screen flex-col overflow-hidden font-['Noto_Sans',sans-serif]">
      <TopBar />
      <div className="flex min-h-0 flex-1">
        <Sidebar />
        <div className="flex min-w-0 flex-1 flex-col">
          <TabStrip />
          <Toolbar />
          <LocustPage />
          <DownloadShelf />
        </div>
      </div>
    </div>
  );
}
